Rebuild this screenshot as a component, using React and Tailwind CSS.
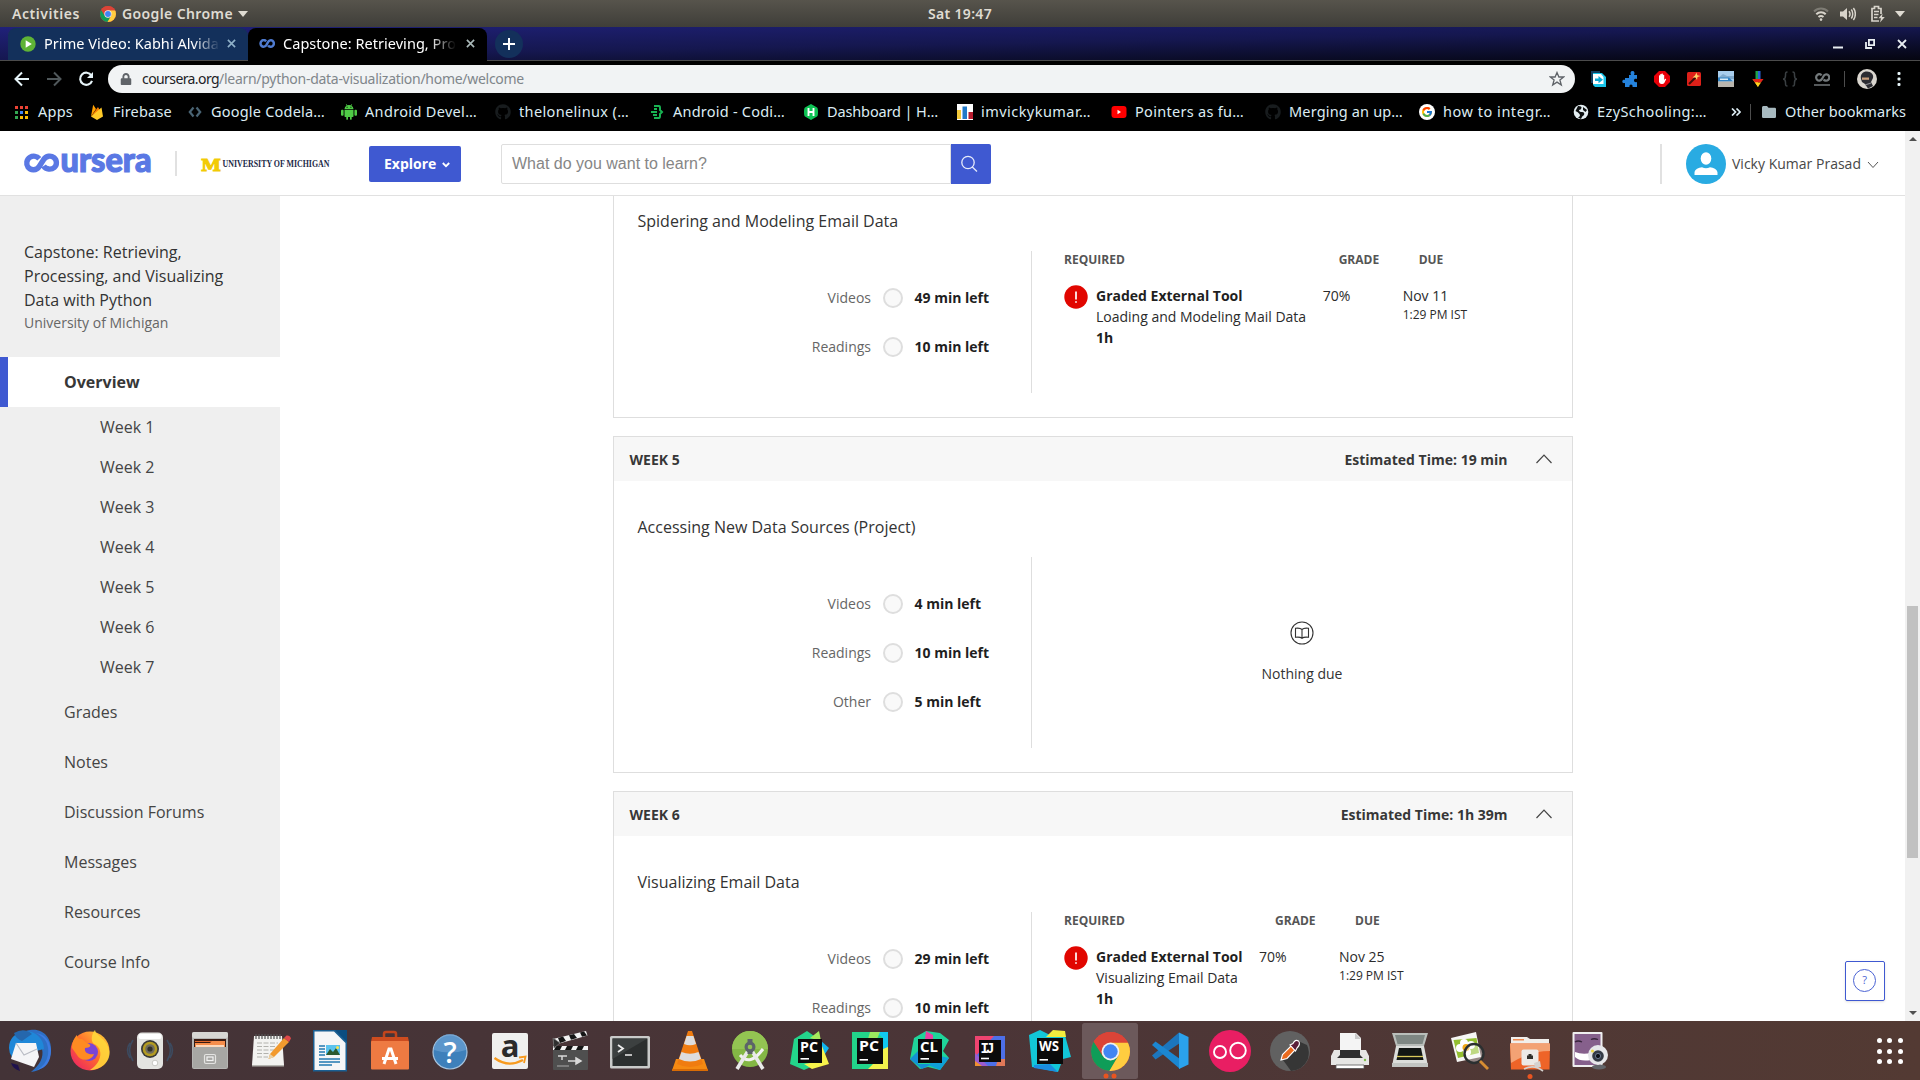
import React, { useLayoutEffect, useRef, useState } from "react";
import { FaGithub, FaLock, FaHandPaper } from "react-icons/fa";
import { FcGoogle } from "react-icons/fc";

const OPEN = "font-['Open_Sans','Noto_Sans',sans-serif]";
const SYS = "font-['Noto_Sans','Open_Sans',sans-serif]";

/* Single line label whose tracking is adjusted so that it fills a given width. */
function FitText({ width, children, className = "" }) {
  const ref = useRef(null);
  const [spacing, setSpacing] = useState(0);
  useLayoutEffect(() => {
    const fit = () => {
      const el = ref.current;
      if (!el) return;
      el.style.letterSpacing = "0px";
      const natural = el.getBoundingClientRect().width;
      const s = (width - natural) / String(children).length;
      el.style.letterSpacing = s + "px";
      setSpacing(s);
    };
    fit();
    if (document.fonts) document.fonts.ready.then(fit);
  }, [width, children]);
  return (
    <span ref={ref} className={"inline-block whitespace-nowrap " + className} style={{ letterSpacing: spacing }}>
      {children}
    </span>
  );
}

function ChromeLogo({ className, id }) {
  return (
    <svg viewBox="0 0 48 48" className={className}>
      <defs>
        <clipPath id={id}>
          <circle cx="24" cy="24" r="24" />
        </clipPath>
      </defs>
      <g clipPath={`url(#${id})`}>
        <rect width="48" height="48" fill="#db4437" />
        <path d="M0 0 L3.2 12 L14.5 29.5 L24 35 L33.5 29.5 L23 48 H0Z" fill="#0f9d58" />
        <path d="M24 13H48V48H22.5L33.5 29.5L35 24Z" fill="#ffcd40" />
        <path d="M0 0H48V13H24L14 19.5V28.5L3.2 10Z" fill="#db4437" />
      </g>
      <circle cx="24" cy="24" r="11" fill="#f1f1f1" />
      <circle cx="24" cy="24" r="8.8" fill="#4285f4" />
    </svg>
  );
}

function Infinity2({ className, color, w = 4 }) {
  return (
    <svg viewBox="0 0 34 20" className={className} fill="none" stroke={color} strokeWidth={w} strokeLinecap="butt">
      <path d="M15 5.2C12.5 2.2 8.5 1.8 5.6 3.9C2 6.5 1.6 12 4.6 15C8 18.4 13.2 17.6 16.2 12.6L19.2 7C21.4 3 26 1.5 29.4 4C33 6.6 33.2 12.4 30 15.3C26.6 18.3 22 17.6 19.4 14.4" />
    </svg>
  );
}

/* ---------- GNOME top bar ---------- */
function TopBar() {
  return (
    <div className={`grid h-[27px] grid-cols-[1fr_auto_1fr] items-center bg-linear-to-b from-[#57544c] to-[#3f3e39] text-[14px] leading-[27px] font-semibold text-[#dfdbd2] ${SYS}`}>
      <div className="flex items-center pl-3">
        <FitText width={68}>Activities</FitText>
        <ChromeLogo id="chrome-top" className="ml-5 h-4 w-4" />
        <FitText width={111} className="ml-[6px]">Google Chrome</FitText>
        <svg viewBox="0 0 10 6" className="ml-[5px] h-[6px] w-[10px]"><path d="M0 0H10L5 6Z" fill="#dfdbd2" /></svg>
      </div>
      <FitText width={64}>Sat 19:47</FitText>
      <div className="flex items-center justify-end pr-[15px]">
        <svg viewBox="0 0 16 16" className="h-4 w-4" fill="none" stroke="#d8d4cb" strokeWidth="2">
          <path d="M1 5.5C5 1.6 11 1.6 15 5.5" opacity=".35" />
          <path d="M3.3 8.3C6 5.7 10 5.7 12.7 8.3" />
          <path d="M5.5 11C7 9.7 9 9.7 10.5 11" />
          <circle cx="8" cy="13.6" r="1.3" fill="#d8d4cb" stroke="none" />
        </svg>
        <svg viewBox="0 0 16 16" className="ml-[11px] h-4 w-4" fill="none" stroke="#d8d4cb" strokeWidth="1.5">
          <path d="M0 5.5H3L7 2V14L3 10.5H0Z" fill="#d8d4cb" stroke="none" />
          <path d="M9 5.2C10.2 6.8 10.2 9.2 9 10.8M11.3 3.5C13.2 6 13.2 10 11.3 12.5M13.4 2C16 5.4 16 10.6 13.4 14" />
        </svg>
        <svg viewBox="0 0 16 18" className="ml-[14px] h-[18px] w-4" fill="none" stroke="#d8d4cb" strokeWidth="1.7">
          <path d="M9 16H2V3.5H4.5V1.5H8.5V3.5H11V9M4 6.5H9M4 9.5H8.5M4 12.5H7.5" />
          <path d="M12.5 8.5L8.5 13.3H11L10 17.5L14.8 12H12Z" fill="#d8d4cb" stroke="none" />
        </svg>
        <svg viewBox="0 0 10 6" className="ml-[9px] h-[6px] w-[10px]"><path d="M0 0H10L5 6Z" fill="#dfdbd2" /></svg>
      </div>
    </div>
  );
}

/* ---------- Browser chrome ---------- */
function Close({ className }) {
  return (
    <svg viewBox="0 0 10 10" className={className} stroke="currentColor" strokeWidth="1.8">
      <path d="M1 1L9 9M9 1L1 9" />
    </svg>
  );
}

function TabStrip() {
  return (
    <div className={`flex h-[34px] items-stretch bg-linear-to-br from-[#20217a] via-[#15174f] to-[#05050f] text-[14.5px] text-white shadow-[inset_0_-1px_0_#4b4b4b] ${SYS}`}>
      <div className="ml-2 mt-px flex w-[240px] items-center rounded-t-lg bg-[#13305b] pb-[2px] pl-3 shadow-[inset_0_-1px_0_#4b4b4b]">
        <svg viewBox="0 0 16 16" className="h-4 w-4 shrink-0"><circle cx="8" cy="8" r="7.7" fill="#5fb336" /><path d="M5.7 4.3L11.8 8L5.7 11.7Z" fill="#fff" /></svg>
        <div className="ml-2 w-[176px] overflow-hidden mask-r-from-85% mask-r-to-100%"><FitText width={175}>Prime Video: Kabhi Alvida</FitText></div>
        <Close className="ml-[7px] h-[9px] w-[9px] text-[#8fb0c8]" />
      </div>
      <div className="mt-px flex w-[239px] items-center rounded-t-lg bg-black pb-[2px] pl-[11px]">
        <Infinity2 className="h-[9px] w-4 shrink-0" color="#4f7bd0" w={5.5} />
        <div className="ml-2 w-[173px] overflow-hidden mask-r-from-85% mask-r-to-100%"><FitText width={173}>Capstone: Retrieving, Pro</FitText></div>
        <Close className="ml-[10px] h-[9px] w-[9px] text-[#a9b8b8]" />
      </div>
      <div className="ml-2 mt-[3px] flex h-7 w-7 items-center justify-center rounded-full bg-[#13305b]">
        <svg viewBox="0 0 12 12" className="h-3 w-3" stroke="#fff" strokeWidth="2"><path d="M6 0V12M0 6H12" /></svg>
      </div>
      <div className="ml-auto flex items-center gap-[22px] pr-[13px] text-[#e8eef2]">
        <svg viewBox="0 0 10 10" className="h-[10px] w-[10px]"><path d="M0 7.5H10V9.5H0Z" fill="currentColor" /></svg>
        <svg viewBox="0 0 10 10" className="h-[10px] w-[10px]" fill="none" stroke="currentColor" strokeWidth="1.8"><path d="M3.9 .9H9.1V6.1H3.9ZM1 3V9H7" /></svg>
        <Close className="h-[10px] w-[10px]" />
      </div>
    </div>
  );
}

function Extensions() {
  return (
    <div className="flex items-center gap-4">
      <svg viewBox="0 0 16 16" className="h-4 w-4"><path d="M1 0H10V12H1Z" fill="#123c5e" /><path d="M3 4V2H12L16 6V16H5L3 14Z" fill="#19c5ea" /><path d="M3 3H11L13.500 6V13H3Z" fill="#fff" /><path d="M5 7.500H8.500V5L13 8.700L8.500 12.300V10H5Z" fill="#0aa9d6" /></svg>
      <svg viewBox="0 0 16 16" className="h-4 w-4"><path d="M7 4H9C8 2 8.500 0 10.500 0S13 2 12 4H15V8C13 7.500 12 8 12 9.500S13.500 11.500 15 11V16H10.500C11 14.500 10 13.500 9 13.500S7 14.500 7.500 16H3V12C1.500 12.500 .3 11.700 .3 10.500S1.500 8.500 3 9V7H7Z" fill="#2583dd" /></svg>
      <svg viewBox="0 0 16 16" className="h-4 w-4"><path d="M5 0H11L16 5V11L11 16H5L0 11V5Z" fill="#e80008" /><path d="M5 8V4.500Q5.600 4 6.200 4.500V7V3.300Q6.900 2.700 7.500 3.300V7V2.800Q8.200 2.200 8.900 2.800V7.200V4Q9.600 3.400 10.200 4V9L11.200 7.700Q12 7.500 12.200 8.200L10.300 12Q9.600 13 8.200 13H7.600Q5.500 13 5 11Z" fill="#fff" /></svg>
      <svg viewBox="0 0 16 16" className="h-4 w-4"><rect x="1" y="1" width="14" height="14" rx="1.500" fill="#dd2019" /><path d="M3 13L9.500 6.500" stroke="#3a0c08" strokeWidth="2" /><path d="M10.500 1.500L11.300 4.300L14.500 5L11.500 6L11 9L9.500 6.500L6.500 6.500L9 4.500Z" fill="#ffd469" /></svg>
      <svg viewBox="0 0 16 16" className="h-4 w-4"><rect width="16" height="16" fill="#a8cdec" /><path d="M0 7L5 3L9 5H16V8H0Z" fill="#7fa9cc" /><path d="M0 6.500H11L15 10.500H0Z" fill="#2f82c4" /><path d="M2 7.500H10V9H2Z" fill="#d9ecf8" /><rect y="10.500" width="16" height="5.500" fill="#b9b5ad" /></svg>
      <svg viewBox="0 0 16 16" className="h-4 w-4"><path d="M5.500 0H8V8H5.500Z" fill="#1fa24a" /><path d="M8 0H10.500V8H8Z" fill="#2a62d8" /><path d="M2.500 8H8V16Z" fill="#ffd21f" /><path d="M2.500 8H13.500L11 11.500H5Z" fill="#e32218" /><path d="M5 11.500H11L8 16Z" fill="#ffd21f" /></svg>
      <svg viewBox="0 0 16 16" className="h-4 w-4" fill="none" stroke="#3a3f42" strokeWidth="1.500"><path d="M5.500 1C3.500 1 3.500 2 3.500 4.500S3 8 1 8C3 8 3.500 9 3.500 11.500S3.500 15 5.500 15M10.500 1C12.500 1 12.500 2 12.500 4.500S13 8 15 8C13 8 12.500 9 12.500 11.500S12.500 15 10.500 15" /></svg>
      <div className="flex h-4 w-4 flex-col items-center justify-center gap-[2px]"><Infinity2 className="h-[9px] w-[15px]" color="#73797b" w={5} /><div className="h-[2px] w-4 bg-[#55595b]" /></div>
    </div>
  );
}

function Toolbar() {
  return (
    <div className={`flex h-9 items-center bg-black ${SYS}`}>
      <svg viewBox="0 0 16 16" className="ml-[14px] h-4 w-4" fill="none" stroke="#e6f4f8" strokeWidth="2"><path d="M15 8H2M8 1.500L1.500 8L8 14.500" /></svg>
      <svg viewBox="0 0 16 16" className="ml-4 h-4 w-4" fill="none" stroke="#50585b" strokeWidth="2"><path d="M1 8H14M8 1.500L14.500 8L8 14.500" /></svg>
      <svg viewBox="0 0 16 16" className="ml-4 h-4 w-4" fill="none" stroke="#e6f4f8" strokeWidth="2.100"><path d="M13.400 4.500A6.100 6.100 0 1 0 14 9.800" /><path d="M15 1V7H9Z" fill="#e6f4f8" stroke="none" /></svg>
      <div className="ml-[14px] flex h-7 w-[1467px] items-center rounded-full bg-[#f1f3f4] text-[14px]">
        <FaLock className="ml-3 h-[12px] w-[12px] text-[#5f6368]" />
        <div className="ml-[10px] flex pb-[2px]">
          <FitText width={77} className="text-[#202124]">coursera.org</FitText>
          <FitText width={305} className="text-[#80868b]">/learn/python-data-visualization/home/welcome</FitText>
        </div>
        <svg viewBox="0 0 16 16" className="ml-auto mr-[10px] h-4 w-4" fill="none" stroke="#5f6368" strokeWidth="1.300"><path d="M8 1.500L9.900 6H14.700L10.900 9L12.300 14L8 11.100L3.700 14L5.100 9L1.300 6H6.100Z" /></svg>
      </div>
      <div className="ml-[15px]"><Extensions /></div>
      <div className="ml-[14px] h-4 w-px bg-[#4d4d4d]" />
      <svg viewBox="0 0 20 20" className="ml-3 h-5 w-5"><circle cx="10" cy="10" r="10" fill="#dad6cf" /><path d="M4 10C3 5 6 2.500 10 2.500S17 5.500 16 9L14 13L16 17L11 19.500L8 15L5 13Z" fill="#2c2c32" /><path d="M5 8.500H12V10.800H5Z" fill="#c79e7b" /><path d="M8 16L14 14" stroke="#8d8d92" strokeWidth="1.200" /></svg>
      <svg viewBox="0 0 4 16" className="ml-5 h-4 w-1" fill="#e6f4f8"><rect x=".500" y="1" width="3" height="3" rx="1" /><rect x=".500" y="6.500" width="3" height="3" rx="1" /><rect x=".500" y="12" width="3" height="3" rx="1" /></svg>
    </div>
  );
}

const bookmarks = [
  { text: "Google Codela…", w: 114, icon: <svg viewBox="0 0 16 16" className="h-4 w-4" fill="none" stroke="#4a6474" strokeWidth="2.200"><path d="M6.500 3.500L2.800 8L6.500 12.500M9.500 3.500L13.200 8L9.500 12.500" /></svg> },
  { text: "Android Devel…", w: 112, icon: <svg viewBox="0 0 16 16" className="h-4 w-4" fill="#4fcc46"><path d="M3.500 5Q3.700 2.700 5.600 1.600L4.800 .3L5.300 0L6.200 1.300Q8 .7 9.800 1.300L10.700 0L11.200 .3L10.400 1.600Q12.300 2.700 12.500 5Z" /><path d="M3.500 5.700H12.500V12.300Q12.500 13 11.800 13H10.700V15.200Q10 16.500 9 15.200V13H7V15.200Q6 16.500 5.300 15.200V13H4.200Q3.500 13 3.500 12.300Z" /><rect x="0" y="5.700" width="2.600" height="6" rx="1" /><rect x="13.400" y="5.700" width="2.600" height="6" rx="1" /><path d="M5.600 2.800H6.600V3.800H5.600ZM9.400 2.800H10.400V3.800H9.400Z" fill="#000" /></svg> },
  { text: "thelonelinux (…", w: 110, icon: <FaGithub className="h-4 w-4 text-[#181c1e]" /> },
  { text: "Android - Codi…", w: 112, icon: <svg viewBox="0 0 16 16" className="h-4 w-4" fill="none" stroke="#18b352" strokeWidth="2"><path d="M5 2H10Q11 2 11 4V6L13 8L11 10V12Q11 14 10 14H5M2 8H8M5 5H8M4 11H8" /></svg> },
  { text: "Dashboard | H…", w: 111, icon: <svg viewBox="0 0 16 16" className="h-4 w-4"><path d="M8 0L14 3.500Q15 4 15 8T14 12.500L8 16L2 12.500Q1 12 1 8T2 3.500Z" fill="#0ec254" /><path d="M5.500 4V12M10.500 4V12M5.500 8H10.500" stroke="#fff" strokeWidth="1.900" /></svg> },
  { text: "imvickykumar…", w: 110, icon: <svg viewBox="0 0 16 16" className="h-4 w-4"><rect width="16" height="16" fill="#fff" /><rect x="0" y="6" width="4" height="9" fill="#f4c93a" /><rect x="5.500" y="2.500" width="4.500" height="12.500" fill="#2279c8" /><rect x="11.500" y="8" width="4.500" height="7" fill="#b81d2f" /></svg> },
  { text: "Pointers as fu…", w: 109, icon: <svg viewBox="0 0 16 16" className="h-4 w-4"><rect x=".500" y="2" width="15" height="12" rx="3" fill="#f00" /><path d="M6.500 5.800L10 8L6.500 10.200Z" fill="#fff" /></svg> },
  { text: "Merging an up…", w: 114, icon: <FaGithub className="h-4 w-4 text-[#181c1e]" /> },
  { text: "how to integr…", w: 108, icon: <div className="flex h-4 w-4 items-center justify-center rounded-full bg-white"><FcGoogle className="h-3 w-3" /></div> },
  { text: "EzySchooling:…", w: 110, icon: <svg viewBox="0 0 16 16" className="h-4 w-4"><circle cx="8" cy="8" r="7.300" fill="#e4eef2" /><path d="M5 2Q9 2 8.500 4T6 6Q6 8 9 8T11 11Q9 12 8 15L5 13.500Q8 12 6.500 10T2.500 7ZM10 3L14 6L12.500 8L10 6Z" fill="#0c0f10" /></svg> },
];

function BookmarkBar() {
  const colors = ["bg-[#ea4335]", "bg-[#ea4335]", "bg-[#ea4335]", "bg-[#34a853]", "bg-[#4285f4]", "bg-[#fbbc05]", "bg-[#34a853]", "bg-[#fbbc05]", "bg-[#fbbc05]"];
  return (
    <div className={`flex h-[34px] items-center bg-black pb-[4px] text-[14.5px] text-[#dcecf3] ${SYS}`}>
      <div className="ml-[15px] grid h-[13px] w-[13px] grid-cols-3 gap-[2px]">
        {colors.map((c, i) => <div key={i} className={c} />)}
      </div>
      <FitText width={35} className="ml-[10px]">Apps</FitText>
      <svg viewBox="0 0 16 16" className="ml-[16px] h-4 w-4"><path d="M2 12.500L4.200 .800L7 5L2 12.500Z" fill="#ffa000" /><path d="M2 12.500L9 3L11 6.500Z" fill="#f57c00" /><path d="M2 12.500L12.500 3.500L14 12.500L8 16Z" fill="#ffca28" /></svg>
      <FitText width={59} className="ml-2">Firebase</FitText>
      <div className="ml-[15px] flex">
        {bookmarks.map((b) => (
          <div key={b.text} className="flex w-[154px] items-center gap-2">
            {b.icon}
            <FitText width={b.w}>{b.text}</FitText>
          </div>
        ))}
      </div>
      <svg viewBox="0 0 10 8" className="ml-[4px] h-2 w-[10px]" fill="none" stroke="#dcecf3" strokeWidth="1.700"><path d="M1 .500L4.500 4L1 7.500M5.500 .500L9 4L5.500 7.500" /></svg>
      <div className="ml-[9px] h-4 w-px bg-[#4d4d4d]" />
      <svg viewBox="0 0 14 12" className="ml-[11px] h-3 w-[14px]"><path d="M0 1.500Q0 0 1.300 0H5L6.500 1.800H12.700Q14 1.800 14 3V10.700Q14 12 12.700 12H1.300Q0 12 0 10.700Z" fill="#a7b9bf" /></svg>
      <FitText width={121} className="ml-[9px]">Other bookmarks</FitText>
    </div>
  );
}

/* ---------- Coursera page ---------- */
function Header() {
  return (
    <header className="flex h-[65px] items-center border-b border-[#e1e1e1] bg-white pt-px">
      <svg viewBox="0 0 130 60" className="ml-[23px] h-[60px] w-[130px]">
        <g fill="none" stroke="#5a78e4" strokeWidth="5.400">
          <path d="M16.300 24.700C14 22.100 10 21.500 7 23.300C3.400 25.500 2.900 30.300 5 33.200C7.700 36.800 13.500 36.700 16.200 32.500L20.700 25.500C23 21.900 27.800 21.100 31 23.700C34.100 26.300 34.200 31 31.300 33.500C28.300 36 23 35.600 20.600 32" />
        </g>
        <text x="37.500" y="37.500" textLength="91" lengthAdjust="spacingAndGlyphs" fill="#5a78e4" stroke="#5a78e4" strokeWidth="1.200" className="font-['Lato',sans-serif] text-[33.5px] font-black">ursera</text>
      </svg>
      <div className="ml-[22px] h-[25px] w-[2px] bg-[#e1e1e1]" />
      <svg viewBox="0 0 134 40" className="ml-[23px] h-10 w-[134px]">
        <text x="1" y="26.500" textLength="20" lengthAdjust="spacingAndGlyphs" fill="#f2cb05" stroke="#f2cb05" strokeWidth="1" className="font-['DejaVu_Serif',serif] text-[17px] font-bold">M</text>
        <text x="22.500" y="23" textLength="107" lengthAdjust="spacingAndGlyphs" fill="#1c2a48" className="font-['Liberation_Serif',serif] text-[9.5px] font-bold">UNIVERSITY OF MICHIGAN</text>
      </svg>
      <button className={`ml-[35px] flex h-9 w-[92px] items-center rounded-[2px] bg-[#3f59d1] pl-[15px] text-[14px] font-bold text-white ${OPEN}`}>
        Explore
        <svg viewBox="0 0 8 6" className="ml-[6px] mt-[2px] h-[6px] w-2" fill="none" stroke="#fff" strokeWidth="1.800"><path d="M.800 1L4 4.200L7.200 1" /></svg>
      </button>
      <div className="ml-10 flex h-10 w-[490px]">
        <div className="flex flex-1 items-center rounded-l-[2px] border border-[#dedede] pl-[10px] font-['Liberation_Sans',Arial,sans-serif] text-[16px] text-[#868686]">What do you want to learn?</div>
        <div className="flex w-10 items-center justify-center rounded-r-[2px] bg-[#3f59d1] pr-[4px]">
          <svg viewBox="0 0 18 18" className="h-[18px] w-[18px]" fill="none" stroke="#e7ebfb" strokeWidth="1.300"><circle cx="8" cy="7.500" r="6.200" /><path d="M12.300 12L17 16.500" /></svg>
        </div>
      </div>
      <div className={`ml-auto flex h-10 items-center border-l-2 border-[#e1e1e1] pl-[24px] pr-[26px] text-[14px] text-[#474747] ${OPEN}`}>
        <svg viewBox="0 0 40 40" className="h-10 w-10"><circle cx="20" cy="20" r="20" fill="#29abe2" /><ellipse cx="20" cy="14.500" rx="5.300" ry="6.200" fill="#fff" /><path d="M8.500 31V28.500C9 25 12.500 23.800 16 23.200Q20 25.500 24 23.200C27.500 23.800 31 25 31.500 28.500V31Z" fill="#fff" /></svg>
        <FitText width={129} className="ml-[6px] pb-px">Vicky Kumar Prasad</FitText>
        <svg viewBox="0 0 12 8" className="ml-[6px] mt-[2px] h-2 w-3" fill="none" stroke="#555" strokeWidth="1"><path d="M1 1L6 6.500L11 1" /></svg>
      </div>
    </header>
  );
}

const weeks = ["Week 1", "Week 2", "Week 3", "Week 4", "Week 5", "Week 6", "Week 7"];
const links = ["Grades", "Notes", "Discussion Forums", "Messages", "Resources", "Course Info"];

function Sidebar() {
  return (
    <aside className="w-[280px] shrink-0 bg-[#efefef] text-[16px] text-[#444]">
      <div className="h-[161px] pl-6 pt-11">
        <div className="w-[210px] leading-6 text-[#333]">Capstone: Retrieving, Processing, and Visualizing Data with Python</div>
        <div className="text-[14px] leading-[21px] text-[#666]">University of Michigan</div>
      </div>
      <div className="flex h-[50px] items-center border-l-8 border-[#3f59d1] bg-white pl-14 font-bold text-[#373737]">Overview</div>
      {weeks.map((w) => <div key={w} className="flex h-10 items-center pl-[100px]">{w}</div>)}
      {links.map((l) => <div key={l} className="flex h-[50px] items-center pl-16">{l}</div>)}
    </aside>
  );
}

function Assignment({ name, due }) {
  return (
    <div className="pl-8">
      <div className="grid w-max grid-cols-[auto_80px_auto] text-[14px] leading-[21px] text-[#2b2b2b]">
        <div className="text-[12px] leading-[18px] font-bold text-[#555]">REQUIRED</div>
        <div className="pl-4 text-[12px] leading-[18px] font-bold text-[#555]">GRADE</div>
        <div className="pl-4 text-[12px] leading-[18px] font-bold text-[#555]">DUE</div>
        <div className="mt-4 flex pr-[16.5px]">
          <svg viewBox="0 0 24 24" className="mr-2 h-6 w-6 shrink-0"><circle cx="12" cy="12" r="11.700" fill="#e10600" /><path d="M12 6.500V14.500M12 16.200V17.800" stroke="#fff" strokeWidth="1.700" /></svg>
          <div>
            <div className="font-bold text-[#1f1f1f]">Graded External Tool</div>
            <div>{name}</div>
            <div className="font-bold text-[#1f1f1f]">1h</div>
          </div>
        </div>
        <div className="mt-4">70%</div>
        <div className="mt-4">
          <div>{due}</div>
          <div className="text-[12px] leading-[18px]">1:29 PM IST</div>
        </div>
      </div>
    </div>
  );
}

function NothingDue() {
  return (
    <div className="flex h-full w-[540px] flex-col items-center pt-[64px] text-[14px] text-[#333]">
      <svg viewBox="0 0 24 24" className="h-6 w-6" fill="none" stroke="#333" strokeWidth="1.100"><circle cx="12" cy="12" r="11" /><path d="M12 8.500C10.500 7 8 7 5.500 7.300V16.300C8 16 10.500 16 12 17.300C13.500 16 16 16 18.500 16.300V7.300C16 7 13.500 7 12 8.500V17" /></svg>
      <div className="mt-[18px] leading-[21px]">Nothing due</div>
    </div>
  );
}

function WeekCard({ week, time, title, rows, children, className = "" }) {
  return (
    <section className={"w-[960px] shrink-0 border border-[#dedede] bg-white pb-6 " + className}>
      {week && (
        <div className="flex h-11 items-center bg-[#f7f7f7] pl-[15.5px] pr-5 text-[14px] font-bold text-[#373737]">
          {week}
          <span className="ml-auto">{time}</span>
          <svg viewBox="0 0 16 10" className="ml-[28.5px] h-[10px] w-4" fill="none" stroke="#444" strokeWidth="1.200"><path d="M.500 9L8 1.200L15.500 9" /></svg>
        </div>
      )}
      <div className="h-[76px] pl-[23.5px] pt-[34px] text-[16px] leading-6 text-[#333]">{title}</div>
      <div className="flex">
        <div className="w-[417px] shrink-0 py-[22px] text-[14px]">
          {rows.map(([k, v]) => (
            <div key={k} className="flex h-[49px] items-center">
              <div className="w-[257px] text-right text-[#666]">{k}</div>
              <div className="ml-3 h-5 w-5 rounded-full border-2 border-[#dedede] bg-[#f9f9f9]" />
              <div className="ml-[11.5px] font-bold text-[#1f1f1f]">{v}</div>
            </div>
          ))}
        </div>
        <div className="border-l border-[#dedede]">{children}</div>
      </div>
    </section>
  );
}

function Page() {
  return (
    <div className="flex h-[890px] overflow-hidden bg-white">
      <div className={`flex w-[1905px] flex-col ${OPEN}`}>
        <Header />
        <div className="relative flex h-[825px] overflow-hidden">
          <Sidebar />
          <main className="ml-[333px] flex flex-col gap-[18px]">
            <WeekCard className="-mt-[22px]" title="Spidering and Modeling Email Data" rows={[["Videos", "49 min left"], ["Readings", "10 min left"]]}>
              <Assignment name="Loading and Modeling Mail Data" due="Nov 11" />
            </WeekCard>
            <WeekCard week="WEEK 5" time="Estimated Time: 19 min" title="Accessing New Data Sources (Project)" rows={[["Videos", "4 min left"], ["Readings", "10 min left"], ["Other", "5 min left"]]}>
              <NothingDue />
            </WeekCard>
            <WeekCard week="WEEK 6" time="Estimated Time: 1h 39m" title="Visualizing Email Data" rows={[["Videos", "29 min left"], ["Readings", "10 min left"]]}>
              <Assignment name="Visualizing Email Data" due="Nov 25" />
            </WeekCard>
          </main>
          <button className="absolute right-5 bottom-5 flex h-10 w-10 items-center justify-center rounded-[2px] border border-[#3f59d1] bg-white pr-px pb-px shadow-sm">
            <span className="flex h-[23px] w-[23px] items-center justify-center rounded-full border border-[#4b63d4] text-[11px] text-[#4b63d4]">?</span>
          </button>
        </div>
      </div>
      <div className="flex w-[15px] flex-col items-center bg-[#f1f1f1]">
        <svg viewBox="0 0 8 4" className="mt-[6px] h-1 w-2"><path d="M0 4L4 0L8 4Z" fill="#505050" /></svg>
        <div className="mt-[465px] h-[252px] w-[11px] bg-[#c1c1c1]" />
        <svg viewBox="0 0 8 4" className="mt-auto mb-[6px] h-1 w-2"><path d="M0 0H8L4 4Z" fill="#505050" /></svg>
      </div>
    </div>
  );
}

/* ---------- Dock ---------- */
function IdeBadge({ x, s, label, size = 13.5 }) {
  return (
    <>
      <rect x={x} y={x} width={s} height={s} fill="#0b0b0b" />
      <text x={x + 2} y={x + 12.8} textLength={s - 6} lengthAdjust="spacingAndGlyphs" fill="#fff" fontSize={size} className="font-['Open_Sans',sans-serif] font-bold">{label}</text>
      <rect x={x + 2.500} y={x + s - 5} width="8.500" height="1.600" fill="#fff" />
    </>
  );
}

const dockIcons = [
  <g key="mail">
    <path d="M30 9C44 7 52 18 51 30C50 42 42 50 31 51C40 44 44 36 42 28L20 14C23 11 26 9.500 30 9Z" fill="#2d6fc4" />
    <path d="M9 27C9 18 15 12 22 11C32 8 44 16 44 28L12 36Q9 32 9 27Z" fill="#1f87d8" />
    <path d="M36 12Q50 18 48 34Q46 44 37 49Q51 46 51 29Q49 14 36 12Z" fill="#3d7be0" />
    <path d="M14 12Q24 6 32 13L22 20Q16 18 14 12Z" fill="#2567ad" />
    <path d="M11 42Q13 48 20 50L18 44Z" fill="#20124d" />
    <path d="M16 22L36 22L39 36L34 46L11 38Z" fill="#f5f5f7" />
    <path d="M16 22L24 34L37 28" fill="none" stroke="#b9bcc4" strokeWidth="1.100" />
  </g>,
  <g key="firefox">
    <circle cx="30" cy="30" r="19.500" fill="url(#ff)" />
    <path d="M35 9C36 15 48 18 49.500 31C50 42 40 49 30 49C42 42 44 27 34 23C30 20 32 12 35 9Z" fill="#ffd93b" opacity=".85" />
    <circle cx="29" cy="31" r="9" fill="#7a44d6" />
    <path d="M12 27C12 20 15 16 17 14C17 17 19 18 22 18L27 22C33 24 30 27 25 27C24 32 29 34 34 33C32 40 20 41 17 34Z" fill="#ff8b22" />
  </g>,
  <g key="rhythm">
    <path d="M13 19Q6 29 13 40M47 19Q54 29 47 40M10 22Q5 29 10 37M50 22Q55 29 50 37" stroke="#3c4a5f" strokeWidth="1.600" fill="none" />
    <rect x="17" y="11.500" width="26" height="36.500" rx="5" fill="#e4e4e1" />
    <rect x="18.500" y="13" width="23" height="5" rx="2" fill="#fff" />
    <circle cx="30" cy="28" r="9" fill="#3a3a38" /><circle cx="30" cy="28" r="7.300" fill="#b39b22" /><circle cx="30" cy="28" r="4.800" fill="#706c5c" /><circle cx="30" cy="28" r="2.600" fill="#302f2a" />
    <circle cx="35" cy="42" r="2.800" fill="#fff" stroke="#c9c9c4" />
  </g>,
  <g key="files">
    <rect x="12" y="11" width="36" height="37" rx="2" fill="#b5b5b3" />
    <rect x="12" y="11" width="36" height="6" rx="2" fill="#d6d6d3" />
    <rect x="14" y="18" width="32" height="8" fill="#3a1b12" />
    <path d="M15 20H44V21H15Z" fill="#e0662a" /><path d="M15 22H30L32 20H45V26H15Z" fill="#f58d4b" /><path d="M16 24H44V26H16Z" fill="#fcd9bd" />
    <rect x="13" y="26" width="34" height="21" fill="#a7a7a4" />
    <rect x="24.500" y="33.500" width="11" height="9" rx="1.500" fill="none" stroke="#e4e4e2" strokeWidth="1.200" /><rect x="27" y="36" width="6" height="3.500" fill="none" stroke="#f3f3f3" strokeWidth="1.200" />
  </g>,
  <g key="notes">
    <path d="M14 15H42L44 44H12Z" fill="#f3f3f1" />
    <path d="M12 44H44V45.500H12Z" fill="#b5b5b0" />
    <path d="M16 13V18M19 13V18M22 13V18M25 13V18M28 13V18M31 13V18M34 13V18M37 13V18M40 13V18" stroke="#555" strokeWidth="1.200" />
    <path d="M17 22H38M17 25.500H36M17 29H35M17 32.500H30M17 36H28" stroke="#b2b2ad" strokeWidth="1" strokeDasharray="5 1.500" />
    <path d="M30 33L44 17L49 21L34 36L28.500 38Z" fill="#f29a2e" /><path d="M44 17L46.500 14.500Q50 14 51 17.500L49 21Z" fill="#e0484a" /><path d="M30 33L34 36L28.500 38Z" fill="#e9d2a8" />
  </g>,
  <g key="writer">
    <path d="M13 9H36L47 20V50.500H13Z" fill="#1a5f92" /><path d="M14.500 10.500H34L45.500 22V49H14.500Z" fill="#f5f6f7" /><path d="M35 9H47V21Z" fill="#0b4d80" />
    <path d="M19 25H25M19 28H25M19 31H25M19 34H25M19 38H40M19 41H40M19 44H32" stroke="#2279b1" strokeWidth="1.700" />
    <rect x="26" y="24" width="14" height="10" fill="#5bc3ee" /><path d="M26 34L30 28L33 31L36 27L40 34Z" fill="#2a5a30" /><circle cx="37.500" cy="26.500" r="1.500" fill="#f8e44a" />
  </g>,
  <g key="software">
    <path d="M24 21V13Q24 11 26 11H34Q36 11 36 13V21" stroke="#c3451c" strokeWidth="2.500" fill="none" />
    <path d="M12 16H48L49 21H11Z" fill="#cd4c1f" /><rect x="11" y="20" width="38" height="28.500" rx="1" fill="#ee7a42" />
    <path d="M24 43L29 28H31L36 43M22 37.500H38" stroke="#fff" strokeWidth="3" fill="none" />
  </g>,
  <g key="help">
    <circle cx="30" cy="31" r="17" fill="#3e80bb" stroke="#a6c4df" strokeWidth="1.200" /><path d="M14 29A16 16 0 0 1 46 29Q30 34 14 29Z" fill="#6aa0d2" opacity=".7" />
    <text x="30" y="41.500" textAnchor="middle" fontSize="29" fill="#fff" className="font-['Open_Sans',sans-serif] font-semibold">?</text>
  </g>,
  <g key="amazon">
    <rect x="12" y="12" width="36" height="36" rx="2" fill="#f0f0ef" />
    <text x="30" y="36" textAnchor="middle" fontSize="31" fill="#2b2b2b" className="font-['Open_Sans',sans-serif] font-bold">a</text>
    <path d="M14.500 37Q28 47 43 39" stroke="#f79a1e" strokeWidth="2.300" fill="none" /><path d="M39 36.500L45.500 35.500L44 42" stroke="#f79a1e" strokeWidth="1.800" fill="none" />
  </g>,
  <g key="clapper">
    <rect x="13" y="25" width="35" height="24" rx="1" fill="#4f4f4f" /><path d="M13 25H48V29H13Z" fill="#f2f2f2" /><path d="M16 25H22L20 29H14ZM27 25H33L31 29H25ZM38 25H44L42 29H36Z" fill="#151515" />
    <path d="M13 18L46 10L47.500 14.500L14 24Z" fill="#f2f2f2" /><path d="M18 17L23 15.600L26 20L20 22ZM29 14.200L34 13L37 17L31 18.700ZM40 11.500L44 10.500L47 14.500L42 15.800Z" fill="#151515" /><path d="M13 17L20 22L14 27Z" fill="#2e2e2e" stroke="#777" strokeWidth=".7" />
    <path d="M18 35H27M22 35V39M28 40L36 40M36 37L41 40L36 43Z" stroke="#d9d9d9" strokeWidth="1.500" fill="#d9d9d9" /><path d="M17 45H29" stroke="#aaa" />
  </g>,
  <g key="terminal">
    <rect x="10" y="15" width="40" height="32.500" rx="1.500" fill="#c9cac9" /><rect x="12.500" y="17.500" width="35" height="27.500" fill="#2c2f2f" /><path d="M12.500 17.500H47.500L12.500 38Z" fill="#3c4040" />
    <path d="M18 24L23 27.500L18 31" stroke="#eee" strokeWidth="1.800" fill="none" /><path d="M25 34H32" stroke="#eee" strokeWidth="1.500" />
  </g>,
  <g key="vlc">
    <path d="M16 38H44L48 49.500H12Z" fill="#f58a12" /><path d="M12 48H48V50H12Z" fill="#d96c05" />
    <path d="M28 10H32L43 43Q30 49 17 43Z" fill="#f07c10" /><path d="M26.600 15H33.400L36 23Q30 25.500 24 23Z" fill="#dddddd" /><path d="M21.500 31Q30 34.500 38.500 31L41 38Q30 43 19 38Z" fill="#dddddd" />
  </g>,
  <g key="studio">
    <circle cx="30" cy="28" r="18" fill="#84b745" /><path d="M12 28A18 18 0 0 1 48 28Z" fill="#93c452" />
    <path d="M20 34Q30 46 43 28" stroke="#f1f1f1" strokeWidth="3" fill="none" /><path d="M28 30L17 48M32 30L43 48" stroke="#e9e9e9" strokeWidth="3.600" /><path d="M30 18V33" stroke="#5c6469" strokeWidth="5" /><circle cx="30" cy="26" r="5.500" fill="#5c6469" /><circle cx="30" cy="26" r="2.300" fill="#93c452" />
  </g>,
  <g key="pc1">
    <path d="M14 18L27 10L37 17L38 43L24 49L10 43Z" fill="#23d58b" /><path d="M30 17L39 10L41 20Z" fill="#a5ea5c" /><path d="M40 19L49 27L43 36Z" fill="#10b5f0" /><path d="M42 25L49 43L32 48L24 43L42 40Z" fill="#f7f34b" />
    <IdeBadge x={18} s={24} label="PC" />
  </g>,
  <g key="pc2">
    <path d="M12 11H48V48H12Z" fill="#22d38a" /><path d="M36 11H48V30L43 33V17Z" fill="#10c8f0" /><path d="M30 11H40L37 18H28Z" fill="#9be85f" /><path d="M43 28L48 26V48H28L33 43H43Z" fill="#f3f24c" />
    <IdeBadge x={17} s={26} label="PC" size={14.5} />
  </g>,
  <g key="cl">
    <path d="M14 17L26 10L40 12L49 19L43 30L49 37L40 49L28 46L20 48L10 38Z" fill="#1fd49a" /><path d="M26 10L33 14V18H25Z" fill="#e83fa2" /><path d="M10 38L18 30V43H32L22 48Z" fill="#1490d6" /><path d="M40 35L49 37L40 49L28 44Z" fill="#0f9fd8" />
    <IdeBadge x={18} s={24} label="CL" />
  </g>,
  <g key="ij">
    <path d="M15 15H45V45H15Z" fill="#4d6fe8" /><path d="M15 15H34L15 36Z" fill="#ef4470" /><path d="M15 32L28 45H15Z" fill="#9b5bd0" /><path d="M15 40L22 45H15Z" fill="#f09030" /><path d="M38 38H45V45H36Z" fill="#e07858" />
    <rect x="19" y="19" width="22" height="22" fill="#0b0b0b" /><text x="20.500" y="32" fontSize="14" fill="#fff" className="font-['Liberation_Mono',monospace] font-bold" textLength="14">IJ</text><path d="M21 37.500H29" stroke="#fff" strokeWidth="1.600" />
  </g>,
  <g key="ws">
    <path d="M9 14L20 9L30 14L44 10L46 18L51 36L43 38L38 51L12 46Z" fill="#12c7d8" /><path d="M26 16L33 9L45 10L46 16Z" fill="#f3ee3e" /><path d="M14 44L30 43L38 51L14 47Z" fill="#1a8de0" />
    <IdeBadge x={17} s={26} label="WS" size={14.5} />
  </g>,
  <g key="chrome">
    <rect x="2" y="2" width="56" height="56" rx="2.500" fill="#6c595b" />
    <foreignObject x="10.500" y="10.500" width="39" height="39"><ChromeLogo id="chrome-dock" className="h-[39px] w-[39px]" /></foreignObject>
    <circle cx="26" cy="55" r="2.500" fill="#e95420" /><circle cx="34" cy="55" r="2.500" fill="#e95420" />
  </g>,
  <g key="vscode">
    <path d="M39 11.500L12 34.500L15.500 38.500L40 22Z" fill="#1c76bd" /><path d="M12 24L15.500 20.500L40 38V48Z" fill="#1b87d2" /><path d="M39 11.500L48.500 16V43.500L39 48Z" fill="#2ba2ec" />
  </g>,
  <g key="oo">
    <circle cx="30" cy="30" r="21" fill="#e91e63" /><circle cx="20" cy="31" r="6" fill="none" stroke="#fff" strokeWidth="1.900" /><circle cx="38" cy="29.500" r="7.800" fill="none" stroke="#fff" strokeWidth="1.900" />
  </g>,
  <g key="picker">
    <circle cx="30" cy="30" r="20" fill="#616161" /><path d="M23 39L38 20L47 24Q50 30 48 38Q43 49 31 50Z" fill="#363636" />
    <path d="M21 39L22.500 33.500L31 25L35 29L27 37.500Z" fill="#ea6a1d" stroke="#fff" strokeWidth="1.100" /><path d="M30 24L33 22.500Q35 18 38.500 20Q41 23 37 27L35.500 30Z" fill="#5b1f3a" stroke="#fff" strokeWidth="1.100" />
  </g>,
  <g key="printer">
    <path d="M20 12H36L41 17V34H20Z" fill="#f4f4f4" /><path d="M35 12V18H41Z" fill="#c9c9c9" /><path d="M14 29H20V33H40V29H46L49 35V44H11V35Z" fill="#e6e6e4" /><path d="M20 29H40V34L43 37H17L20 34Z" fill="#2f2f2f" /><path d="M16 44H44V47.500H16Z" fill="#fff" stroke="#555" strokeWidth=".8" /><circle cx="45" cy="39" r="1.200" fill="#7cbf4a" />
  </g>,
  <g key="scanner">
    <path d="M12 12H48L44 25H16Z" fill="#b9beba" /><path d="M15 14H45L42.500 23H17.500Z" fill="#7e8783" /><path d="M16 25H44L48 45H12Z" fill="#dcdedb" /><path d="M19 27H41L43.500 39H16.500Z" fill="#111613" /><path d="M17 35.500H43" stroke="#d8c95b" strokeWidth="1.300" /><path d="M12 42H48V46H12Z" fill="#c2c5c2" />
  </g>,
  <g key="viewer">
    <path d="M11 17L36 11L41 36L17 41Z" fill="#f6f6f4" /><path d="M13.500 19L36.500 17L39 32L18 37Z" fill="#93bf30" /><g fill="#fff"><circle cx="24" cy="22" r="4" /><circle cx="31" cy="24" r="4" /><circle cx="20" cy="27" r="4" /><circle cx="27" cy="31" r="4" /></g><circle cx="26" cy="26.500" r="3.500" fill="#f0a818" />
    <circle cx="34" cy="32.500" r="9.500" fill="#ffffff" fillOpacity=".4" stroke="#2b2f30" strokeWidth="2.400" /><path d="M40 40L48 48" stroke="#d88d32" strokeWidth="2.800" />
  </g>,
  <g key="folder">
    <path d="M11 16H27L30 18H49V25H11Z" fill="#f1efec" /><path d="M13 18H24V19.500H13Z" fill="#f08a50" /><path d="M10 22.500H50L49.500 48.500H11Z" fill="#ee6428" /><path d="M10 22.500H50V30Q30 30 11 42Z" fill="#f3a274" />
    <rect x="21.500" y="28.500" width="17" height="16" rx="2" fill="#eceae6" /><path d="M27 38V34.500H28.500V33H31.500V34.500H33V38Z" fill="#30302a" /><path d="M24 48Q34 43 43 50" stroke="#d5d2cf" strokeWidth="1.600" fill="none" /><path d="M34 42L40 40L41 46L35 47Z" fill="#d5d2cf" />
    <circle cx="30" cy="55.500" r="2.500" fill="#e95420" />
  </g>,
  <g key="cheese">
    <rect x="12.500" y="11" width="30" height="35" rx="1" fill="#f0eff0" /><rect x="14.500" y="13" width="26" height="31" fill="#86608c" /><path d="M15 21Q18 19 22 21M31 18.500Q34 17 38 18.500" stroke="#37243b" strokeWidth="1.300" fill="none" /><path d="M15 31Q22 34 31 32V39Q20 41 15 36Z" fill="#fff" />
    <ellipse cx="39" cy="46" rx="7" ry="2.500" fill="#62656a" /><circle cx="38" cy="34" r="10" fill="#e6e7ea" /><circle cx="38" cy="35" r="5.800" fill="#343a45" /><circle cx="38" cy="35" r="2.600" fill="#0d1017" stroke="#7b8aa5" strokeWidth=".8" /><circle cx="32.500" cy="30" r="1.500" fill="#ecd743" />
  </g>,
];

function Dock() {
  return (
    <div className="flex h-[59px] bg-linear-to-r from-[#433337] via-[#4b3537] to-[#533a33]">
      {dockIcons.map((icon, i) => (
        <svg key={i} viewBox="0 0 60 59" className="h-[59px] w-[60px] shrink-0">
          {i === 1 && (
            <defs>
              <linearGradient id="ff" x1="1" y1="0" x2="0" y2="1"><stop offset="0" stopColor="#ffde3b" /><stop offset=".5" stopColor="#ff6a2b" /><stop offset="1" stopColor="#e8186e" /></linearGradient>
            </defs>
          )}
          {icon}
        </svg>
      ))}
      <div className="mr-[17px] ml-auto grid h-[26px] w-[26px] grid-cols-3 content-between justify-items-center self-center mt-px gap-x-[5px]">
        {Array.from({ length: 9 }, (_, i) => <div key={i} className="h-[5px] w-[5px] rounded-full bg-white" />)}
      </div>
    </div>
  );
}

export default function App() {
  return (
    <div className="flex h-[1080px] w-[1920px] flex-col overflow-hidden bg-white">
      <TopBar />
      <TabStrip />
      <Toolbar />
      <BookmarkBar />
      <Page />
      <Dock />
    </div>
  );
}
